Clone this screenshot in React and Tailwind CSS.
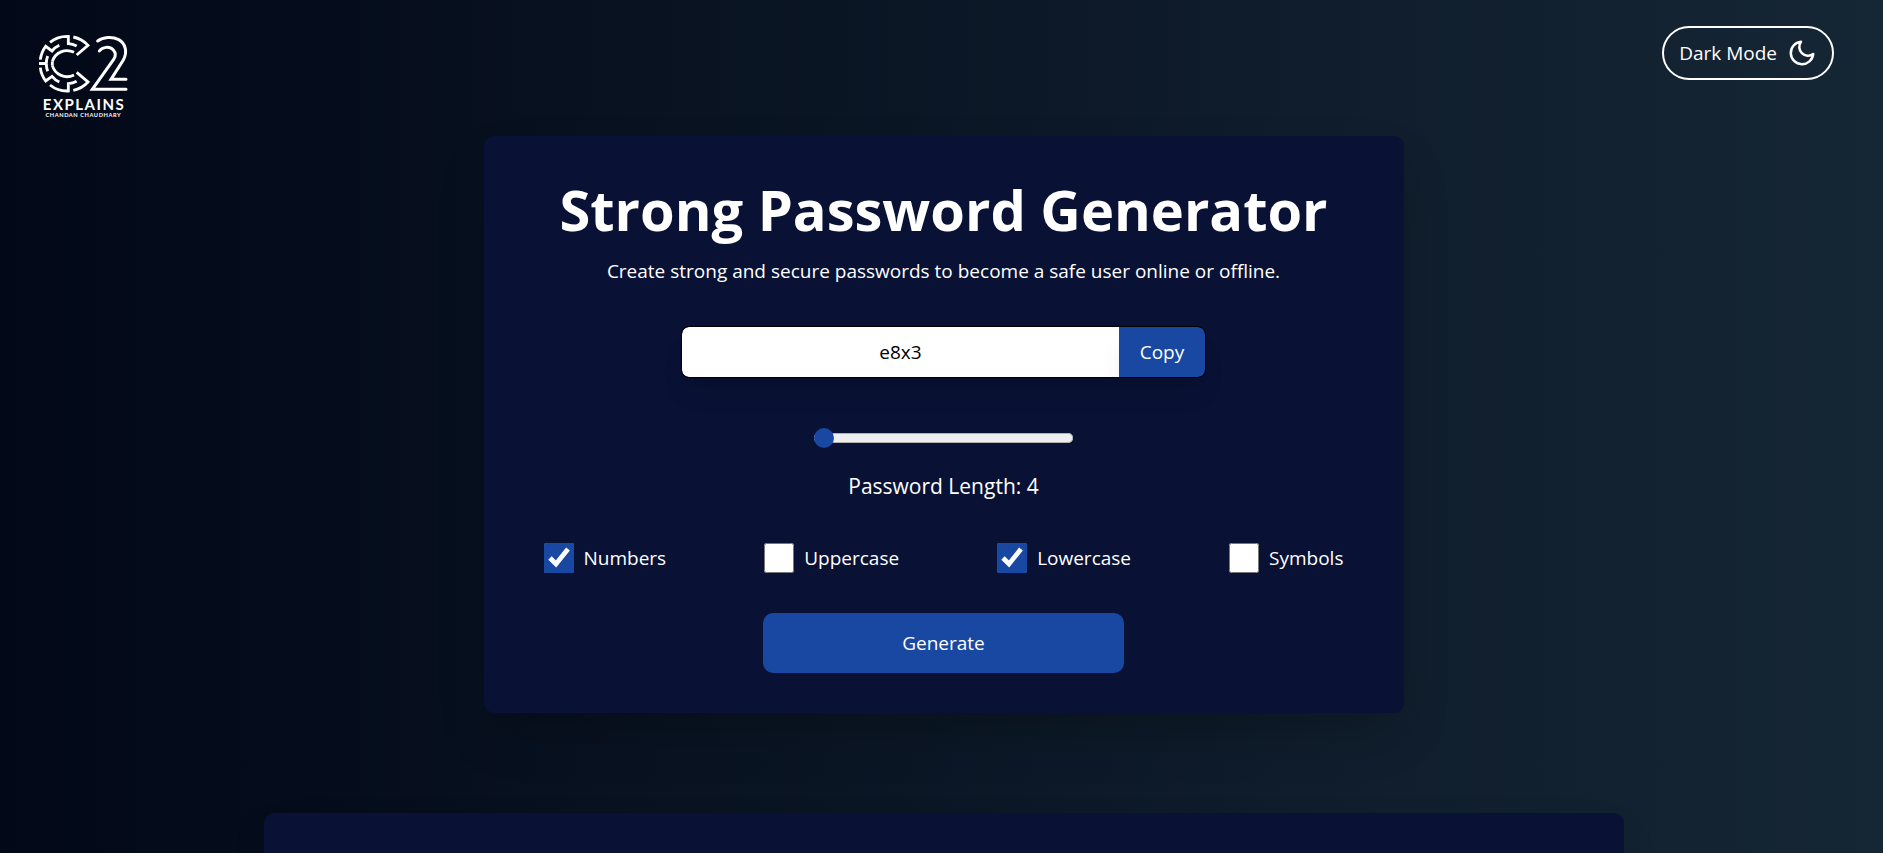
import { useState } from "react";
import { FiMoon } from "react-icons/fi";

const CHARSETS = {
  Numbers: "0123456789",
  Uppercase: "ABCDEFGHIJKLMNOPQRSTUVWXYZ",
  Lowercase: "abcdefghijklmnopqrstuvwxyz",
  Symbols: "!@#$%^&*()_+-=?",
};

function MazeHalf() {
  return (
    <>
      <path d="M58 131H80M80 131A63 63 0 0 1 84 108" />
      <path d="M62 119A82 82 0 0 1 78 79L97 93A60 60 0 0 1 119 76" />
      <path d="M91 67A82 82 0 0 1 146 49V71A60 60 0 0 1 171 78" />
      <path d="M161 51A82 82 0 0 1 205 76L171 105" />
      <path d="M98 125A46 46 0 0 1 163 97" />
    </>
  );
}

function Logo() {
  return (
    <svg viewBox="40 36 300 264" className="h-[88px] w-[100px]" role="img" aria-label="C2 Explains" fill="none" stroke="white" strokeWidth="8.5">
      <MazeHalf />
      <g transform="matrix(1 0 0 -1 0 262)">
        <MazeHalf />
      </g>
      <path d="M98 125V137" />
      <g strokeWidth="9" strokeLinecap="round">
        <path d="M234 63C250 51 278 49 297 59C318 71 324 96 311 120L274 178H319" />
        <path d="M239 93C248 80 270 78 281 90C289 99 289 108 282 118L218 208H319" />
      </g>
      <g fill="white" stroke="none" textAnchor="middle">
        <text x="193" y="270" className="font-['Lato',sans-serif] text-[45px] font-bold tracking-widest">EXPLAINS</text>
        <text x="191" y="291" className="font-['Lato',sans-serif] text-[17px] font-bold tracking-widest">CHANDAN CHAUDHARY</text>
      </g>
    </svg>
  );
}

function Option({ label, checked, onChange }) {
  return (
    <label className="flex items-center gap-2.5 text-[19px] leading-[30px]">
      <input type="checkbox" checked={checked} onChange={onChange} className="size-[30px] accent-[#1848a1]" />
      {label}
    </label>
  );
}

export default function App() {
  const [length, setLength] = useState(4);
  const [password, setPassword] = useState("e8x3");
  const [options, setOptions] = useState({ Numbers: true, Uppercase: false, Lowercase: true, Symbols: false });

  const generate = () => {
    const pool = Object.keys(options).filter((key) => options[key]).map((key) => CHARSETS[key]).join("");
    setPassword(Array.from({ length: pool ? length : 0 }, () => pool[Math.floor(Math.random() * pool.length)]).join(""));
  };

  return (
    <div className="flex min-h-screen flex-col bg-linear-to-r/srgb from-[#020817] to-[#152635] pl-1 font-['Open_Sans',sans-serif] text-white">
      <header className="flex h-[136px] items-start justify-between pt-[26px] pr-[49px] pl-[29px]">
        <a href="#" className="mt-1.5">
          <Logo />
        </a>
        <button type="button" className="flex h-[54px] items-center gap-2.5 rounded-full border-2 border-white px-[15px] text-[19px]">
          Dark Mode <FiMoon className="size-[30px]" />
        </button>
      </header>
      <main className="flex grow flex-col items-center">
        <section className="flex w-full max-w-[920px] flex-col items-center rounded-[10px] bg-[#091235] px-[60px] py-10 shadow-2xl">
          <h1 className="text-[56px] leading-[66px] font-bold">Strong Password Generator</h1>
          <p className="mt-3 text-[19px] leading-[34px]">Create strong and secure passwords to become a safe user online or offline.</p>
          <div className="mt-[38px] flex h-[52px] w-[525px] overflow-hidden rounded-lg border border-black bg-black shadow-xl">
            <input type="text" readOnly value={password} aria-label="Password" className="min-w-0 grow rounded-l-[7px] bg-white text-center text-[19px] text-black outline-none" />
            <button type="button" onClick={() => navigator.clipboard?.writeText(password)} className="w-[86px] rounded-r-[7px] bg-[#1848a1] text-[19px] shadow-xl">
              Copy
            </button>
          </div>
          <input
            id="length"
            type="range"
            min="4"
            max="30"
            value={length}
            onChange={(e) => setLength(Number(e.target.value))}
            className="mt-[55px] h-2.5 w-[259px] appearance-none rounded-full bg-[#efefef] inset-ring inset-ring-[#b2b2b2] [&::-webkit-slider-thumb]:size-5 [&::-webkit-slider-thumb]:appearance-none [&::-webkit-slider-thumb]:rounded-full [&::-webkit-slider-thumb]:bg-[#1848a1]"
          />
          <label htmlFor="length" className="mt-[29px] text-[21px] leading-7">Password Length: {length}</label>
          <div className="mt-[43px] flex w-full justify-between">
            {Object.keys(options).map((key) => (
              <Option key={key} label={key} checked={options[key]} onChange={() => setOptions({ ...options, [key]: !options[key] })} />
            ))}
          </div>
          <button type="button" onClick={generate} className="mt-10 h-15 w-[361px] rounded-[10px] bg-[#1848a1] text-[19px]">
            Generate
          </button>
        </section>
        <section className="mt-[100px] min-h-10 w-full max-w-[1360px] grow rounded-t-[10px] bg-[#091235] shadow-2xl" />
      </main>
    </div>
  );
}
